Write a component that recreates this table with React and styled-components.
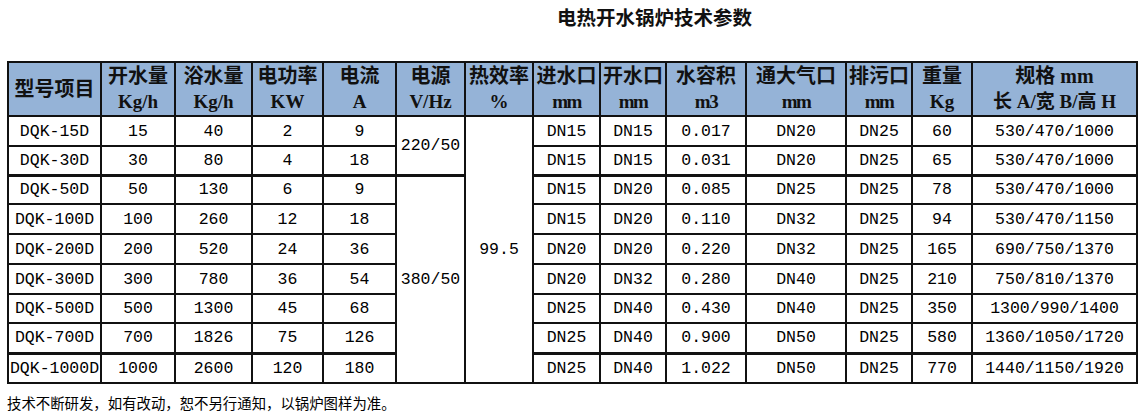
import React from "react";
import styled, { createGlobalStyle } from "styled-components";

const Global = createGlobalStyle`
  html, body { margin: 0; padding: 0; background: #fff; }
  body { font-family: "Liberation Serif", "Noto Sans CJK SC", serif; color: #000; }
`;

const Page = styled.div`
  width: 1143px;
  padding: 5px 0 0 7px;
  box-sizing: border-box;
`;

const Title = styled.div`
  padding-left: 550px;
  font-family: "Noto Sans CJK SC", sans-serif;
  font-weight: 700;
  font-size: 19.5px;
  line-height: 24px;
  height: 24px;
  color: #111;
`;

const Table = styled.table`
  margin-top: 32px;
  width: 1129px;
  table-layout: fixed;
  border-collapse: collapse;
`;

const HeadCell = styled.th`
  background: #95b3d7;
  border: 2px solid #111;
  height: 51px;
  padding: 0;
  text-align: center;
  vertical-align: middle;
  font-family: "Liberation Serif", "Noto Sans CJK SC", serif;
  font-weight: 700;
  font-size: 20px;
  line-height: 26px;
  color: #111;
  white-space: nowrap;
`;

const Unit = styled.span`
  display: block;
  font-size: 19px;
  letter-spacing: ${(p) => (p.$tight ? "-1.5px" : "0")};
`;

const Row = styled.tr`
  height: ${(p) => p.$h}px;
`;

const Cell = styled.td`
  border: 2px solid #111;
  border-top-width: ${(p) => (p.$thick ? "3px" : "2px")};
  padding: 0;
  text-align: center;
  vertical-align: middle;
  font-family: "Liberation Mono", "Noto Sans CJK SC", monospace;
  font-size: 16.5px;
  color: #000;
  white-space: nowrap;
  overflow: hidden;
`;

const Note = styled.div`
  margin-top: 9px;
  font-family: "Noto Sans CJK SC", sans-serif;
  font-size: 14.4px;
  line-height: 20px;
  color: #000;
`;

const widths = [93, 74, 77, 71, 73, 69, 68, 67, 66, 80, 100, 66, 60, 165];

const heads = [
  ["型号项目"],
  ["开水量", "Kg/h"],
  ["浴水量", "Kg/h"],
  ["电功率", "KW"],
  ["电流", "A"],
  ["电源", "V/Hz"],
  ["热效率", "%"],
  ["进水口", "mm", true],
  ["开水口", "mm", true],
  ["水容积", "m3", true],
  ["通大气口", "mm", true],
  ["排污口", "mm", true],
  ["重量", "Kg"],
  ["规格 mm", "长 A/宽 B/高 H"],
];

const rows = [
  ["DQK-15D", "15", "40", "2", "9", "DN15", "DN15", "0.017", "DN20", "DN25", "60", "530/470/1000"],
  ["DQK-30D", "30", "80", "4", "18", "DN15", "DN15", "0.031", "DN20", "DN25", "65", "530/470/1000"],
  ["DQK-50D", "50", "130", "6", "9", "DN15", "DN20", "0.085", "DN25", "DN25", "78", "530/470/1000"],
  ["DQK-100D", "100", "260", "12", "18", "DN15", "DN20", "0.110", "DN32", "DN25", "94", "530/470/1150"],
  ["DQK-200D", "200", "520", "24", "36", "DN20", "DN20", "0.220", "DN32", "DN25", "165", "690/750/1370"],
  ["DQK-300D", "300", "780", "36", "54", "DN20", "DN32", "0.280", "DN40", "DN25", "210", "750/810/1370"],
  ["DQK-500D", "500", "1300", "45", "68", "DN25", "DN40", "0.430", "DN40", "DN25", "350", "1300/990/1400"],
  ["DQK-700D", "700", "1826", "75", "126", "DN25", "DN40", "0.900", "DN50", "DN25", "580", "1360/1050/1720"],
  ["DQK-1000D", "1000", "2600", "120", "180", "DN25", "DN40", "1.022", "DN50", "DN25", "770", "1440/1150/1920"],
];

const heights = [30, 29, 29, 30, 30, 30, 29, 30, 30];
const thickRows = new Set([2, 8]);

export default function App() {
  return (
    <>
      <Global />
      <Page>
        <Title>电热开水锅炉技术参数</Title>
        <Table>
          <colgroup>
            {widths.map((w, i) => (
              <col key={i} style={{ width: w }} />
            ))}
          </colgroup>
          <thead>
            <tr>
              {heads.map(([a, b, tight], i) => (
                <HeadCell key={i}>
                  {a}
                  {b && <Unit $tight={tight}>{b}</Unit>}
                </HeadCell>
              ))}
            </tr>
          </thead>
          <tbody>
            {rows.map((r, ri) => {
              const thick = thickRows.has(ri);
              return (
                <Row key={ri} $h={heights[ri]}>
                  {r.slice(0, 5).map((v, i) => (
                    <Cell key={"a" + i} $thick={thick}>{v}</Cell>
                  ))}
                  {ri === 0 && <Cell rowSpan={2}>220/50</Cell>}
                  {ri === 2 && <Cell rowSpan={7} $thick>380/50</Cell>}
                  {ri === 0 && <Cell rowSpan={9}>99.5</Cell>}
                  {r.slice(5).map((v, i) => (
                    <Cell key={"b" + i} $thick={thick}>{v}</Cell>
                  ))}
                </Row>
              );
            })}
          </tbody>
        </Table>
        <Note>技术不断研发，如有改动，恕不另行通知，以锅炉图样为准。</Note>
      </Page>
    </>
  );
}
